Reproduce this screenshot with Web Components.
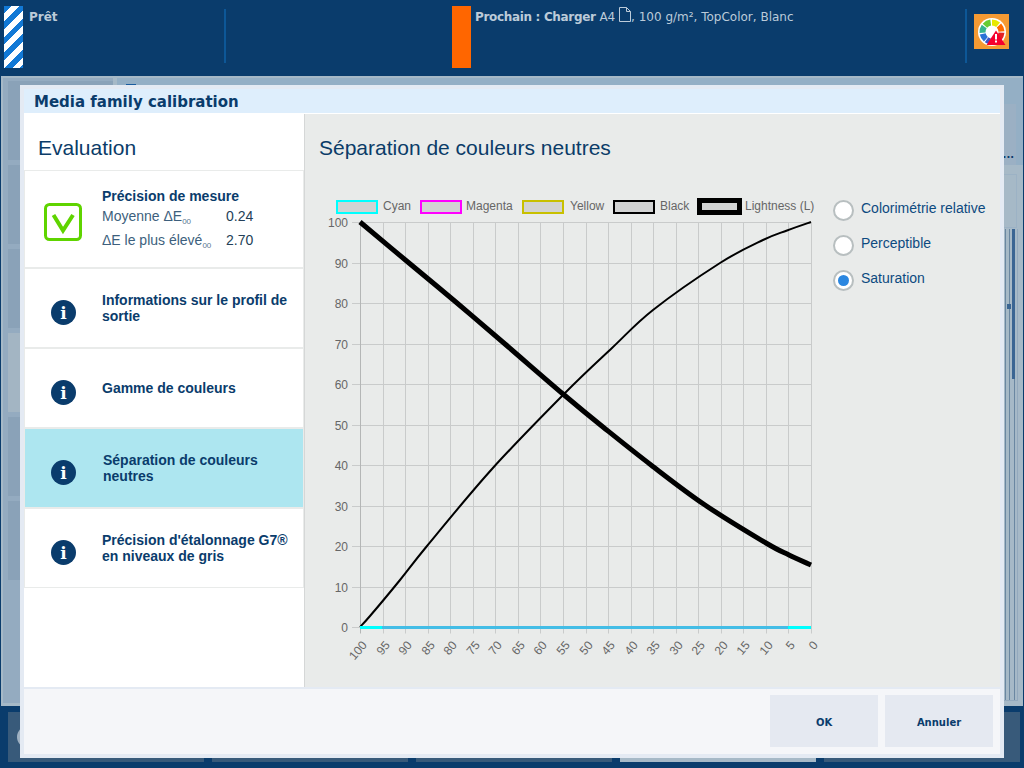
<!DOCTYPE html>
<html lang="fr">
<head>
<meta charset="utf-8">
<title>Media family calibration</title>
<style>
    html, body { margin: 0; padding: 0; width: 1024px; height: 768px; overflow: hidden; background: #0a3c6c; }
</style>
</head>
<body>
<printer-app></printer-app>

<script>
const SANS = '"Liberation Sans", Arial, sans-serif';
const DEJA = '"DejaVu Sans", Verdana, sans-serif';

class StatusBar extends HTMLElement {
    constructor() {
        super();
        this.attachShadow({ mode: 'open' });
    }

    // one coloured slice of the gauge ring, angles clockwise from +x
    slice(from, to, color) {
        const cx = 18, cy = 18, r = 9.5;
        const pt = (a) => `${(cx + r * Math.cos(a * Math.PI / 180)).toFixed(2)} ${(cy + r * Math.sin(a * Math.PI / 180)).toFixed(2)}`;
        return `<path d="M${pt(from)}A${r} ${r} 0 0 1 ${pt(to)}" fill="none" stroke="${color}" stroke-width="6"/>`;
    }

    connectedCallback() {
        const ring = [
            [100, 125, '#3a56c8'], [130, 168, '#2b72d6'], [175, 215, '#35b48f'], [222, 262, '#66cc33'],
            [270, 310, '#e8e800'], [317, 357, '#ff6a00'], [4, 44, '#e52222']
        ].map(([a, b, c]) => this.slice(a, b, c)).join('');
        this.shadowRoot.innerHTML = `
            <style>
                :host { display: flex; height: 76px; background: #0a3c6c; color: #bccbd9; font: 12px ${DEJA}; box-sizing: border-box; padding: 6px 0 8px 4px; }
                .stripes { width: 19px; height: 62px; flex: none; background: repeating-linear-gradient(135deg, #1279d6 0 5.5px, #fff 5.500px 11px); }
                .orange { width: 19px; height: 62px; flex: none; background: #ff6600; }
                .cell { display: flex; flex: none; }
                .first { width: 220px; }
                .sep { width: 2px; height: 54px; margin-top: 3px; flex: none; background: #0d5797; }
                .label { padding: 3px 0 0 6px; line-height: 16px; white-space: nowrap; }
                .next .label { padding: 1px 0 0 4px; }
                .next b { letter-spacing: -.33px; }
                .gap { width: 226px; flex: none; }
                .next { width: 513px; }
                .alert { width: 35px; height: 35px; margin: 8px 0 0 7px; flex: none; }
                .alert svg { display: block; }
                .page { vertical-align: -1px; }
            </style>
            <div class="cell first"><div class="stripes"></div><div class="label"><b>Prêt</b></div></div>
            <div class="sep"></div>
            <div class="gap"></div>
            <div class="cell next"><div class="orange"></div><div class="label"><b>Prochain : Charger</b> A4 <svg class="page" width="12" height="15" viewBox="0 0 12 15" fill="none" stroke="#bccbd9"><path d="M.5.5h7l4 4v10h-11zM7.500.5v4h4"/></svg>, 100 g/m², TopColor, Blanc</div></div>
            <div class="sep"></div>
            <div class="alert">
                <svg width="35" height="35" viewBox="0 0 35 35">
                    <rect width="35" height="35" fill="#f59a33"/>
                    <circle cx="18" cy="18" r="14" fill="#fff"/>
                    ${ring}
                    <path d="M22 16.500L31.500 31H12.500z" fill="#f5002d"/>
                    <rect x="21" y="20" width="2" height="5.500" fill="#fff"/>
                    <rect x="21" y="26.500" width="2" height="2" fill="#fff"/>
                </svg>
            </div>
        `;
    }
}

class BackDrop extends HTMLElement {
    constructor() {
        super();
        this.attachShadow({ mode: 'open' });
    }

    connectedCallback() {
        const tiles = [0, 1, 2, 3, 4, 5].map((i) => `<div class="card ${i === 3 ? 'on' : ''}"></div>`).join('');
        this.shadowRoot.innerHTML = `
            <style>
                :host { display: block; height: 692px; background: #0a3c6c; box-sizing: border-box; padding: 0 1px 0 1px; }
                .main { height: 630px; background: #a6b9c7; box-sizing: border-box; padding: 2px 0 0 2px; display: flex; gap: 4px; }
                .left { width: 110px; height: 625px; background: #94abc0; box-sizing: border-box; padding: 3px 0 0 5px; display: flex; flex-direction: column; gap: 5px; }
                .card { height: 79px; flex: none; background: #8aa2b8; }
                .card.on { background: #a3b5c3; }
                .right { flex: 1; background: #94afc5; display: flex; flex-direction: column; align-items: flex-end; }
                .mark { align-self: flex-start; margin: 6px 0 0 9px; width: 10px; height: 2px; background: #1a5c9e; }
                .side { margin: 18px 7px 0 0; width: 21px; height: 61px; box-sizing: border-box; padding: 45px 2px 0 0; text-align: right; background: #9bb0c4; font: bold 10px/12px ${DEJA}; color: #0a3c6c; }
                .lower { flex: 1; width: 25px; background: #a6b9c7; display: flex; flex-direction: column; align-items: flex-end; }
                .panel { margin: 9px 6px 0 0; width: 22px; height: 54px; flex: none; border: 1px solid #9cb2c5; box-sizing: border-box; }
                .lines {
                    flex: 1; width: 20px; margin: 1px 5px 5px 0; border: solid #93a9bd; border-width: 0 1px 1px 0; box-sizing: border-box;
                    background:
                        linear-gradient(#3a6593, #3a6593) 14px 0 / 3px 150px no-repeat,
                        linear-gradient(#3a6593, #3a6593) 9px 75px / 4px 5px no-repeat,
                        linear-gradient(#6a87a1, #6a87a1) 7px 0 / 1px 100% no-repeat,
                        linear-gradient(#6a87a1, #6a87a1) 11px 0 / 1px 100% no-repeat,
                        linear-gradient(#6a87a1, #6a87a1) 16px 0 / 1px 100% no-repeat;
                }
                .bottom { display: flex; gap: 8px; padding: 6px 0 0 7px; }
                .tile { width: 196px; height: 50px; background: #385a7a; display: flex; align-items: center; padding-left: 9px; box-sizing: border-box; }
                .tile.on { background: #a6b9c7; }
                .disc { width: 22px; height: 22px; border-radius: 50%; background: #9fb1c2; }
            </style>
            <div class="main">
                <div class="left">${tiles}</div>
                <div class="right">
                    <div class="mark"></div>
                    <div class="side">:...</div>
                    <div class="lower">
                        <div class="panel"></div>
                        <div class="lines"></div>
                    </div>
                </div>
            </div>
            <div class="bottom">
                <div class="tile"><div class="disc"></div></div>
                <div class="tile"></div>
                <div class="tile"></div>
                <div class="tile on"></div>
                <div class="tile"></div>
            </div>
        `;
    }
}

class EvalItem extends HTMLElement {
    constructor() {
        super();
        this.attachShadow({ mode: 'open' });
    }

    connectedCallback() {
        const kind = this.getAttribute('icon') || 'info';
        const icon = kind === 'ok'
            ? `<svg width="38" height="38" viewBox="0 0 38 38"><rect x="1.500" y="1.500" width="35" height="35" rx="4" fill="#fff" stroke="#5fd400" stroke-width="3"/><path d="M9.500 12l9.500 15.500L29 12" fill="none" stroke="#5fd400" stroke-width="4"/></svg>`
            : `<svg width="25" height="25" viewBox="0 0 25 25"><circle cx="12.500" cy="12.500" r="12.500" fill="#0a3c6c"/><text x="12.500" y="19" text-anchor="middle" font-family="DejaVu Serif, serif" font-weight="bold" font-size="17" fill="#fff">i</text></svg>`;
        this.shadowRoot.innerHTML = `
            <style>
                :host { display: flex; height: 78px; box-sizing: border-box; margin: 0 0 2px 1px; width: 278px; background: #fff; color: #0a3c6c; font: bold 14px/16px ${SANS}; }
                :host([selected]) { background: #ade6f0; }
                :host([big]) { height: 96px; }
                :host(:last-child) { margin-bottom: 1px; }
                .icon { width: 77px; flex: none; display: flex; justify-content: center; align-items: center; padding-top: 9px; box-sizing: border-box; }
                :host([big]) .icon { padding: 6px 1px 0 0; }
                .text { flex: 1; padding: var(--pad, 23px) 0 0 var(--indent, 0); }
            </style>
            <div class="icon">${icon}</div>
            <div class="text"><slot></slot></div>
        `;
    }
}

class MeasureRows extends HTMLElement {
    constructor() {
        super();
        this.attachShadow({ mode: 'open' });
    }

    connectedCallback() {
        this.shadowRoot.innerHTML = `
            <style>
                :host { display: grid; grid-template-columns: 124px auto; row-gap: 8px; font: 14px/16px ${SANS}; margin-top: 4px; color: #3d5f7d; }
                .val { color: #243f58; }
                sub { font-size: 8px; line-height: 0; vertical-align: -3px; color: #5a7891; }
            </style>
            <div>Moyenne ΔE<sub>00</sub></div><div class="val">0.24</div>
            <div>ΔE le plus élevé<sub>00</sub></div><div class="val">2.70</div>
        `;
    }
}

class SeparationChart extends HTMLElement {
    constructor() {
        super();
        this.attachShadow({ mode: 'open' });
    }

    connectedCallback() {
        this.render();
    }

    // smooth curve through the points read off the plot
    curve(points) {
        let d = `M${points[0][0]} ${points[0][1]}`;
        for (let i = 0; i < points.length - 1; i++) {
            const p0 = points[i - 1] || points[i];
            const p1 = points[i];
            const p2 = points[i + 1];
            const p3 = points[i + 2] || p2;
            const c1x = p1[0] + (p2[0] - p0[0]) / 6;
            const c1y = p1[1] + (p2[1] - p0[1]) / 6;
            const c2x = p2[0] - (p3[0] - p1[0]) / 6;
            const c2y = p2[1] - (p3[1] - p1[1]) / 6;
            d += ` C${c1x.toFixed(1)} ${c1y.toFixed(1)} ${c2x.toFixed(1)} ${c2y.toFixed(1)} ${p2[0]} ${p2[1]}`;
        }
        return d;
    }

    render() {
        // svg origin is page (320, 190)
        const left = 40, right = 491, top = 32.5, bottom = 437.5;
        let grid = '';
        let labels = '';
        for (let i = 0; i <= 10; i++) {
            const y = Math.round(top + (bottom - top) * i / 10 - .5) + .5;
            grid += `<path d="M${left - 8} ${y}H${right}" stroke="#c9cbcb"/>`;
            labels += `<text x="${left - 12}" y="${y + 4}" text-anchor="end">${100 - i * 10}</text>`;
        }
        for (let i = 0; i <= 20; i++) {
            const x = Math.round(left + (right - left) * i / 20) + .5;
            grid += `<path d="M${x} ${top}V${bottom + 6}" stroke="${i === 0 ? '#b4b6b6' : '#c9cbcb'}"/>`;
            labels += `<text transform="translate(${x + 7} ${bottom + 18}) rotate(-50)" text-anchor="end">${100 - i * 5}</text>`;
        }
        const legend = [
            ['Cyan', 16, 42, 63, '#00ffff', 2],
            ['Magenta', 100, 42, 146, '#ff00ff', 2],
            ['Yellow', 202, 42, 250, '#c8c000', 2],
            ['Black', 293, 42, 340, '#000', 2],
            ['Lightness (L)', 377, 45, 425, '#000', 5]
        ].map(([name, x, w, tx, color, sw]) => {
            const y = sw === 5 ? 8 : 10;
            const h = sw === 5 ? 17 : 14;
            return `<rect x="${x + sw / 2}" y="${y + sw / 2}" width="${w - sw}" height="${h - sw}" fill="#d2d3d3" stroke="${color}" stroke-width="${sw}"/>
            <text x="${tx}" y="20">${name}</text>`;
        }).join('');
        const lightness = [[40, 32], [89, 73], [137, 113], [185, 154], [243, 204], [283, 237], [331, 275], [385, 315], [446, 353], [469, 365], [491, 375]];
        const black = [[40, 437], [50, 426], [80, 390], [107, 356], [172, 279], [245, 203], [292, 158], [333, 120], [400, 73], [443, 50], [467, 40.5], [491, 32]];
        this.shadowRoot.innerHTML = `
            <style>
                :host { display: block; width: 500px; height: 480px; flex: none; }
                svg { display: block; font: 12px ${SANS}; fill: #666; }
            </style>
            <svg width="500" height="480" viewBox="0 0 500 480">
                ${grid}
                ${labels}
                ${legend}
                <path d="${this.curve(lightness)}" fill="none" stroke="#000" stroke-width="5"/>
                <path d="${this.curve(black)}" fill="none" stroke="#000" stroke-width="2"/>
                <path d="M${left} 437.500H${right}" stroke="#00ffff" stroke-width="3"/>
                <path d="M62 437.500H468" stroke="#44bde6" stroke-width="3"/>
            </svg>
        `;
    }
}

class RadioList extends HTMLElement {
    constructor() {
        super();
        this.attachShadow({ mode: 'open' });
    }

    connectedCallback() {
        const options = ['Colorimétrie relative', 'Perceptible', 'Saturation'];
        const checked = 2;
        this.shadowRoot.innerHTML = `
            <style>
                :host { display: flex; flex-direction: column; gap: 13px; font: 14px/22px ${SANS}; color: #0d4a80; }
                .row { display: flex; height: 22px; gap: 7px; white-space: nowrap; }
                .dot { width: 17px; height: 17px; border: 2px solid #b8bfc0; border-radius: 50%; background: #fff; margin-top: 1px; display: flex; align-items: center; justify-content: center; }
                .dot.on::after { content: ''; width: 11px; height: 11px; border-radius: 50%; background: #2b87e0; }
                span { margin-top: -2px; }
            </style>
            ${options.map((o, i) => `<div class="row"><div class="dot ${i === checked ? 'on' : ''}"></div><span>${o}</span></div>`).join('')}
        `;
    }
}

class DialogButton extends HTMLElement {
    constructor() {
        super();
        this.attachShadow({ mode: 'open' });
    }

    connectedCallback() {
        this.shadowRoot.innerHTML = `
            <style>
                :host { display: flex; width: 108px; height: 52px; box-sizing: border-box; padding-top: 2px; align-items: center; justify-content: center; background: #e5e9f1; color: #0a3c6c; font: bold 10px ${DEJA}; }
            </style>
            <slot></slot>
        `;
    }
}

class CalibrationDialog extends HTMLElement {
    constructor() {
        super();
        this.attachShadow({ mode: 'open' });
    }

    connectedCallback() {
        this.shadowRoot.innerHTML = `
            <style>
                :host { position: absolute; left: 20px; top: 85px; width: 984px; height: 673px; box-sizing: border-box; padding: 4px; background: #e4eaf3; display: flex; flex-direction: column; }
                .title { height: 24px; flex: none; background: #deeefc; color: #0a3c6c; font: bold 15px/26px ${DEJA}; padding-left: 10px; }
                .body { height: 573px; flex: none; display: flex; border-top: 1px solid #fff; }
                .nav { width: 280px; flex: none; background: #fff; }
                .nav h2 { height: 57px; margin: 0; box-sizing: border-box; padding: 21px 0 0 14px; font: 21px/26px ${SANS}; color: #0b3c68; border-bottom: 1px solid #e9ebea; }
                .list { background: #e9ebea; height: 417px; }
                .content { flex: 1; background: #e9ebea; border-left: 1px solid #d5d7d7; }
                .content h2 { margin: 0; padding: 21px 0 0 14px; font: 21px/26px ${SANS}; color: #0b3c68; }
                .pane { display: flex; padding: 29px 0 0 15px; }
                .radios { padding-left: 13px; margin-top: 9px; }
                .foot { flex: 1; background: #f5f6f9; border-top: 2px solid #e4eaf3; display: flex; gap: 7px; justify-content: flex-end; padding: 6px 7px 0 0; }
            </style>
            <div class="title">Media family calibration</div>
            <div class="body">
                <div class="nav">
                    <h2>Evaluation</h2>
                    <div class="list">
                        <eval-item icon="ok" big style="--pad: 17px">
                            Précision de mesure
                            <measure-rows></measure-rows>
                        </eval-item>
                        <eval-item style="--pad: 23px">Informations sur le profil de sortie</eval-item>
                        <eval-item style="--pad: 31px">Gamme de couleurs</eval-item>
                        <eval-item selected style="--pad: 23px; --indent: 1px">Séparation de couleurs neutres</eval-item>
                        <eval-item style="--pad: 23px">Précision d'étalonnage G7® en niveaux de gris</eval-item>
                    </div>
                </div>
                <div class="content">
                    <h2>Séparation de couleurs neutres</h2>
                    <div class="pane">
                        <separation-chart></separation-chart>
                        <radio-list class="radios"></radio-list>
                    </div>
                </div>
            </div>
            <div class="foot">
                <dialog-button>OK</dialog-button>
                <dialog-button>Annuler</dialog-button>
            </div>
        `;
    }
}

class PrinterApp extends HTMLElement {
    constructor() {
        super();
        this.attachShadow({ mode: 'open' });
    }

    connectedCallback() {
        this.shadowRoot.innerHTML = `
            <style>
                :host { display: block; position: relative; width: 1024px; height: 768px; overflow: hidden; }
            </style>
            <status-bar></status-bar>
            <back-drop></back-drop>
            <calibration-dialog></calibration-dialog>
        `;
    }
}

customElements.define('status-bar', StatusBar);
customElements.define('back-drop', BackDrop);
customElements.define('eval-item', EvalItem);
customElements.define('measure-rows', MeasureRows);
customElements.define('separation-chart', SeparationChart);
customElements.define('radio-list', RadioList);
customElements.define('dialog-button', DialogButton);
customElements.define('calibration-dialog', CalibrationDialog);
customElements.define('printer-app', PrinterApp);
</script>
</body>
</html>
